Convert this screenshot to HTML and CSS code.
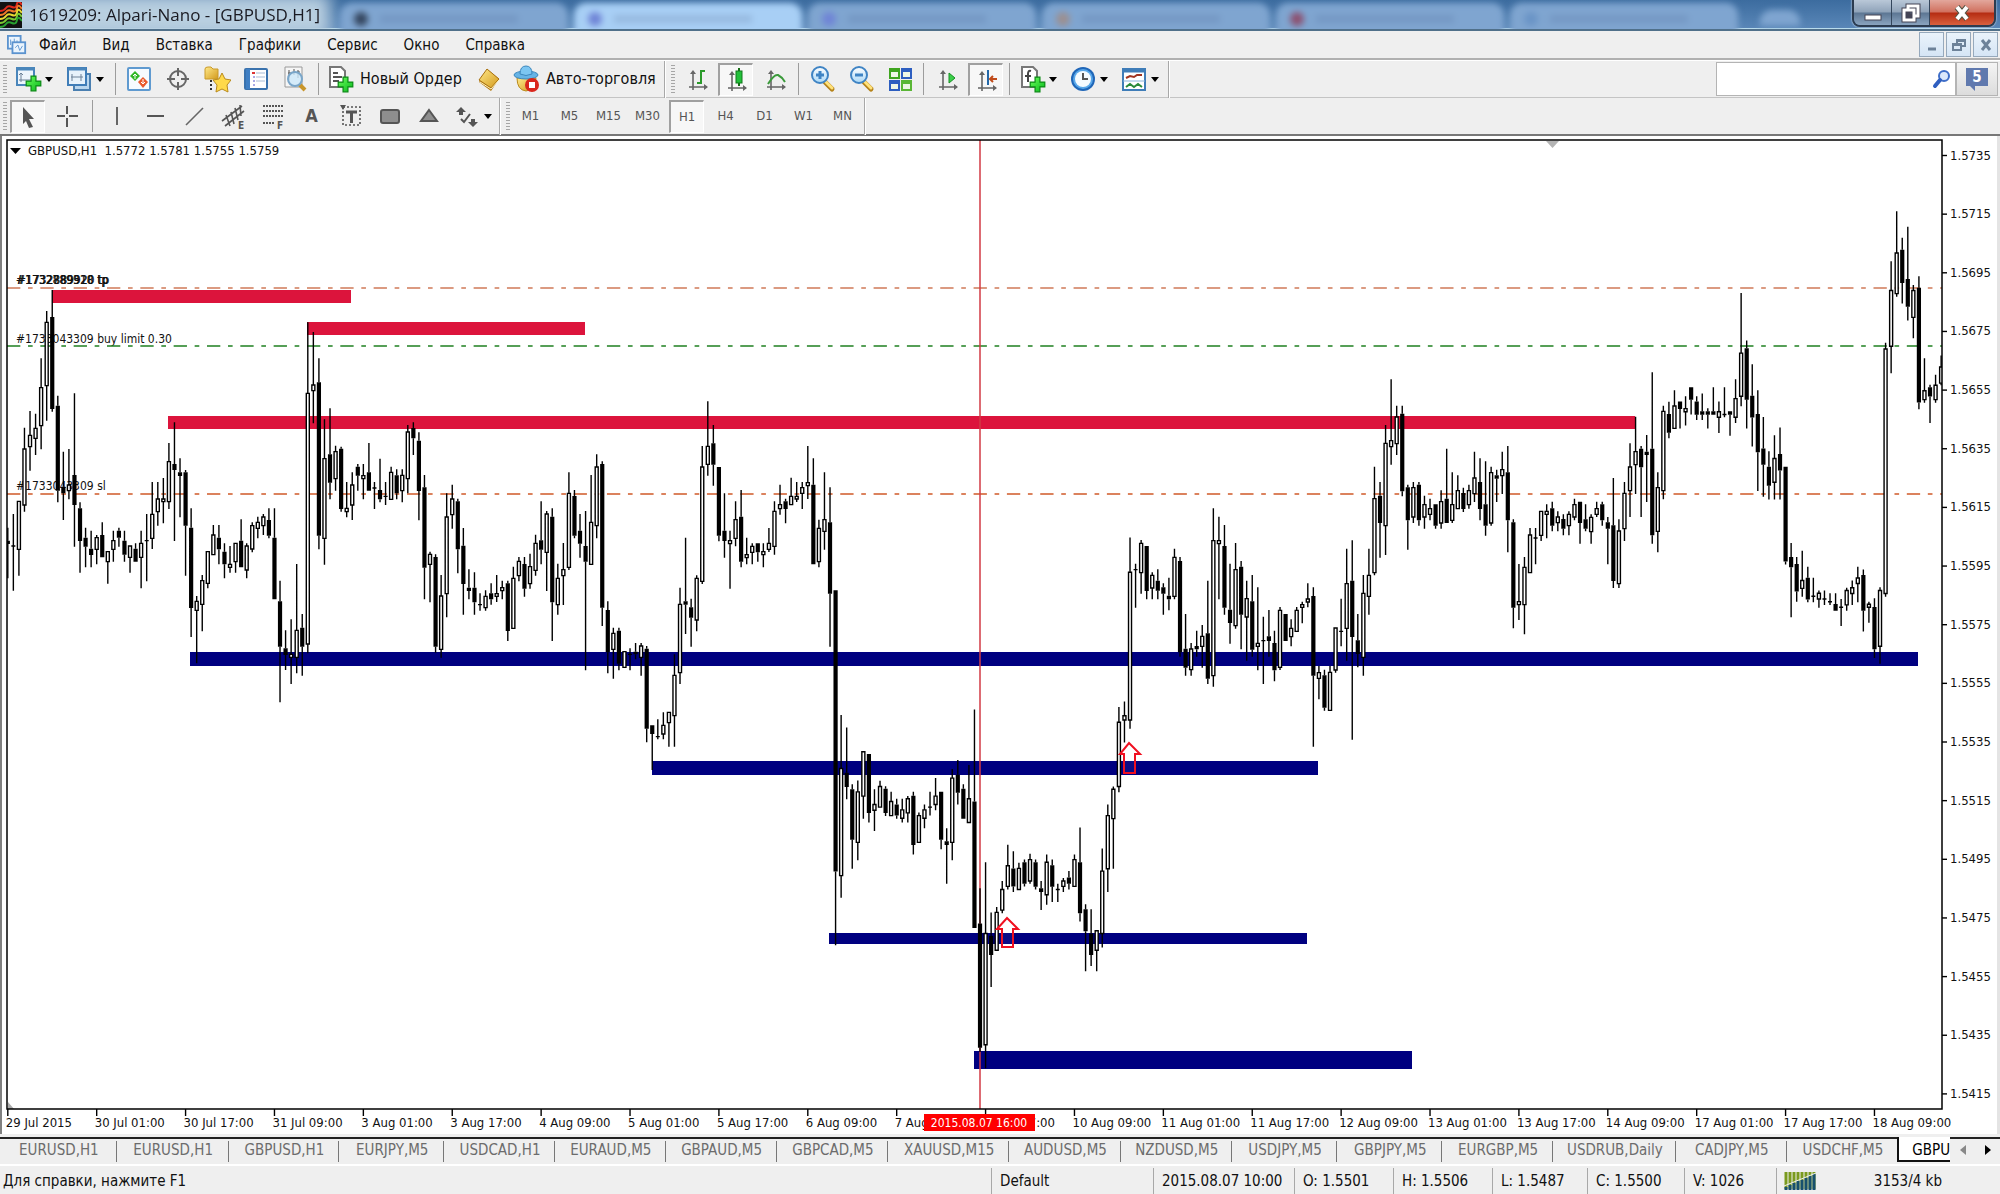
FILE: index.html
```html
<!DOCTYPE html>
<html lang="ru">
<head>
<meta charset="utf-8">
<title>1619209: Alpari-Nano - [GBPUSD,H1]</title>
<link rel="stylesheet" href="styles.css">
</head>
<body>
<svg class="defs" aria-hidden="true">
  <defs>
    <linearGradient id="gold" x1="0" y1="0" x2="1" y2="1"><stop offset="0" stop-color="#ffe98a"/><stop offset="1" stop-color="#d39a1c"/></linearGradient>
    <linearGradient id="green" x1="0" y1="0" x2="1" y2="1"><stop offset="0" stop-color="#6dff5c"/><stop offset="1" stop-color="#06b81c"/></linearGradient>
    <linearGradient id="lens" x1="0" y1="0" x2="0" y2="1"><stop offset="0" stop-color="#fff"/><stop offset="1" stop-color="#a9d8f7"/></linearGradient>
    <symbol id="plus" viewBox="0 0 14 14"><path d="M5 1h4v4h4v4H9v4H5V9H1V5h4z" fill="url(#green)" stroke="#0a8a14"/></symbol>
    <symbol id="axes" viewBox="0 0 24 24"><path d="M7 4v18M3 19h18" fill="none" stroke="#666" stroke-width="1.6"/><path d="M7 2l3 4H4zM22 19l-4 3v-6z" fill="#666"/></symbol>
    <symbol id="glass" viewBox="0 0 26 28"><path d="M15 17l7 7" stroke="#b58218" stroke-width="5" stroke-linecap="round"/><path d="M16 17l6 6" stroke="#ffe27a" stroke-width="3" stroke-linecap="round"/><circle cx="10" cy="10" r="8" fill="url(#lens)" stroke="#3f84c4" stroke-width="2"/></symbol>
  </defs>
</svg>

<header class="title">
  <span class="glow"></span>
  <span class="ghosts" aria-hidden="true">
    <i class="ghost g1"></i><i class="ghost lit g2"></i><i class="ghost g3"></i><i class="ghost g4"></i><i class="ghost g5"></i><i class="ghost g6"></i><i class="ghost g7"></i>
  </span>
  <svg class="app" viewBox="0 0 22 26"><rect width="22" height="26" fill="#111"/><g fill="none" stroke-width="2"><path d="M0 9q4 0 6-3t6-1 5-3 5 1" stroke="#e02a1c"/><path d="M0 13q4 0 6-3t6-1 5-3 5 1" stroke="#f07828"/><path d="M0 17q4 0 6-3t6-1 5-3 5 1" stroke="#e8d832"/><path d="M0 21q4 0 6-3t6-1 5-3 5 1" stroke="#7ac832"/><path d="M0 25q4 0 6-3t6-1 5-3 5 1" stroke="#28a030"/></g></svg>
  <h1>1619209: Alpari-Nano - [GBPUSD,H1]</h1>
  <div class="winbtns">
    <button aria-label="Свернуть"><svg viewBox="0 0 20 20"><rect x="2" y="12" width="16" height="5" fill="#fff" stroke="#445"/></svg></button>
    <button aria-label="Развернуть"><svg viewBox="0 0 20 20"><g fill="#5c7693" stroke="#445" stroke-width="5"><path d="M7 3h10v10H7zM3 7h10v10H3z"/></g><g fill="none" stroke="#fff" stroke-width="3"><path d="M7 7V3h10v10h-4M3 7h10v10H3z"/></g></svg></button>
    <button class="close" aria-label="Закрыть"><svg viewBox="0 0 20 20"><path d="M5 4l10 12M15 4L5 16" stroke="#554" stroke-width="6"/><path d="M5 4l10 12M15 4L5 16" stroke="#fff" stroke-width="4"/></svg></button>
  </div>
</header>

<nav class="menu">
  <svg class="doc" viewBox="0 0 22 22"><rect x="1" y="1" width="14" height="14" fill="#eaf4fd" stroke="#5b93cf" stroke-width="2"/><path d="M4 5v6M8 4v5M11 6v4" stroke="#5b93cf"/><rect x="6" y="8" width="14" height="12" fill="#eaf4fd" stroke="#5b93cf" stroke-width="2"/><path d="M9 14l3-3 2 6 3-5" fill="none" stroke="#5b93cf"/></svg>
  <a href="#file">Файл</a><a href="#view">Вид</a><a href="#insert">Вставка</a><a href="#charts">Графики</a><a href="#tools">Сервис</a><a href="#window">Окно</a><a href="#help">Справка</a>
  <div class="mdi">
    <button aria-label="Свернуть окно"><svg viewBox="0 0 16 16"><path d="M4 12h8" stroke="#6d8299" stroke-width="3"/></svg></button>
    <button aria-label="Восстановить окно"><svg viewBox="0 0 16 16"><path d="M6 6V3h8v6h-3M2 7h8v6H2zM2 8h8M6 4h8" fill="none" stroke="#6d8299" stroke-width="2"/></svg></button>
    <button aria-label="Закрыть окно"><svg viewBox="0 0 16 16"><path d="M4 3l8 10M12 3L4 13" stroke="#6d8299" stroke-width="3"/></svg></button>
  </div>
</nav>

<div class="toolbars">
<div class="bar first">
  <span class="grip"></span>
  <button class="drop" aria-label="Новый график"><svg viewBox="0 0 28 28"><rect x="3" y="3" width="17" height="17" fill="#edf5fc" stroke="#4a86bb" stroke-width="2"/><path d="M3 4h17" stroke="#4a86bb" stroke-width="3"/><path d="M7 8v9M5 15h12M5 10l2-2 2 2" fill="none" stroke="#6c8197"/><use href="#plus" x="11" y="10" width="17" height="17"/></svg><b></b></button>
  <button class="drop" aria-label="Профили"><svg viewBox="0 0 28 28"><path d="M9 9h16v16H9z" fill="#b9d6ee" stroke="#4a7fb0" stroke-width="2"/><rect x="3" y="3" width="18" height="17" fill="#e7f2fb" stroke="#3f7db8" stroke-width="2"/><path d="M3 4h18" stroke="#4a86bb" stroke-width="3"/><path d="M6 12h12M7 9v7M16 9v7" stroke="#6c8197"/></svg><b></b></button>
  <span class="sep"></span>
  <button class="tool" aria-label="Обзор рынка"><svg viewBox="0 0 28 28"><rect x="3" y="3" width="22" height="22" rx="1" fill="#f7fbff" stroke="#5f9ad0" stroke-width="2"/><path d="M10 6l5 5-5 5-5-5z" fill="#2fb826"/><path d="M8 11l2-2 2 2M10 10v4" fill="none" stroke="#fff"/><path d="M18 12l5 5-5 6-5-6z" fill="#ea5a2c"/><path d="M16 17l2 2 2-2M18 14v4" fill="none" stroke="#fff"/></svg></button>
  <button class="tool" aria-label="Окно данных"><svg viewBox="0 0 28 28"><circle cx="14" cy="14" r="8" fill="none" stroke="#666" stroke-width="2"/><path d="M14 3v8M14 17v8M3 14h8M17 14h8" stroke="#666" stroke-width="2"/></svg></button>
  <button class="tool" aria-label="Навигатор"><svg viewBox="0 0 28 28"><path d="M2 14V4q0-2 3-2h3l2 2h5v10z" fill="url(#gold)" stroke="#c99a2a"/><path d="M8 15v12" stroke="#333" stroke-width="2" stroke-dasharray="2 2"/><path d="M19 8l3 6 6 1-4 5 1 7-6-3-6 3 1-7-4-5 6-1z" fill="#ffd94a" stroke="#b98a1c"/></svg></button>
  <button class="tool" aria-label="Терминал"><svg viewBox="0 0 28 28"><rect x="3" y="4" width="22" height="20" rx="1" fill="#fff" stroke="#3a72ad" stroke-width="2"/><path d="M6 4v20" stroke="#3f7fc4" stroke-width="4"/><path d="M10 8h3" stroke="#d33" stroke-width="2"/><path d="M11 12h2M11 16h2M11 20h2" stroke="#55c" stroke-width="1"/><path d="M14 8h9M14 12h9M14 16h9" stroke="#a9bdd6"/></svg></button>
  <button class="tool" aria-label="Тестер стратегий"><svg viewBox="0 0 28 28"><path d="M4 2h17v20H4z" fill="#f6f6f6" stroke="#999"/><path d="M8 5v10M13 4v6M17 5v8M7 8h3M16 7h3" stroke="#555"/><path d="M18 19l6 6" stroke="#c8952a" stroke-width="4"/><circle cx="14" cy="14" r="7" fill="#cde8fa" fill-opacity=".8" stroke="#7aa6c9" stroke-width="2"/></svg></button>
  <span class="sep"></span>
  <button class="text order"><svg viewBox="0 0 28 28"><path d="M4 2h11l4 4v16H4z" fill="#fff" stroke="#777" stroke-width="2"/><path d="M7 8h5M7 12h9M7 16h6" stroke="#555" stroke-width="2"/><use href="#plus" x="11" y="11" width="17" height="17"/></svg>Новый Ордер</button>
  <button class="tool book" aria-label="MetaEditor"><svg viewBox="0 0 28 28"><path d="M4 17L13 5l11 9-8 12z" fill="#b47a12"/><path d="M4 15L12 4l12 10-8 9z" fill="url(#gold)" stroke="#a8700e"/><path d="M5 17l11 7 8-9" fill="none" stroke="#fff3c0"/></svg></button>
  <button class="text auto"><svg viewBox="0 0 28 28"><path d="M5 13q0 12 9 13 9-1 10-13z" fill="url(#gold)" stroke="#b98a1c"/><ellipse cx="14" cy="10" rx="12" ry="4" fill="#66b4e6" stroke="#3c87bd"/><path d="M8 9q0-8 6-8t6 8q-6 3-12 0z" fill="#7cc6f2" stroke="#3c87bd"/><circle cx="20" cy="20" r="7" fill="#d9261c"/><rect x="17" y="17" width="6" height="6" fill="#fff"/></svg>Авто-торговля</button>
  <span class="end"></span>
  <span class="grip"></span>
  <button class="tool" aria-label="Бары"><svg viewBox="0 0 28 28"><use href="#axes" x="3" y="3" width="24" height="24"/><path d="M18 5v14M18 6h4M14 18h4" stroke="#2a9a2a" stroke-width="2"/></svg></button>
  <button class="tool on" aria-label="Японские свечи"><svg viewBox="0 0 28 28"><use href="#axes" x="3" y="3" width="24" height="24"/><path d="M17 2v18" stroke="#176f17" stroke-width="2"/><rect x="14" y="5" width="6" height="12" fill="#22c03a" stroke="#117a1b"/></svg></button>
  <button class="tool" aria-label="Линия"><svg viewBox="0 0 28 28"><use href="#axes" x="3" y="3" width="24" height="24"/><path d="M7 19q6-10 10-9 4 2 7 7" fill="none" stroke="#3a9a3a" stroke-width="2"/></svg></button>
  <span class="sep"></span>
  <button class="tool" aria-label="Увеличить"><svg viewBox="0 0 28 28"><use href="#glass" x="2" y="0" width="26" height="28"/><path d="M12 6v8M8 10h8" stroke="#3f84c4" stroke-width="3"/></svg></button>
  <button class="tool" aria-label="Уменьшить"><svg viewBox="0 0 28 28"><use href="#glass" x="2" y="0" width="26" height="28"/><path d="M8 10h8" stroke="#3f84c4" stroke-width="3"/></svg></button>
  <button class="tool" aria-label="Окна мозаикой"><svg viewBox="0 0 28 28"><path d="M3 3h11v11H3z" fill="#3fa51f"/><path d="M15 3h11v11H15z" fill="#2d5ec0"/><path d="M3 15h11v11H3z" fill="#2d5ec0"/><path d="M15 15h11v11H15z" fill="#5ab636"/><path d="M5 7h7v5H5zM17 7h7v5h-7zM5 19h7v5H5zM17 19h7v5h-7z" fill="#eef6e6"/></svg></button>
  <span class="sep"></span>
  <button class="tool" aria-label="Автопрокрутка"><svg viewBox="0 0 28 28"><use href="#axes" x="3" y="3" width="24" height="24"/><path d="M16 8v10l6-5z" fill="#3ccf4a" stroke="#149022"/></svg></button>
  <button class="tool on" aria-label="Сдвиг графика"><svg viewBox="0 0 28 28"><use href="#axes" x="3" y="3" width="24" height="24"/><path d="M16 4v15" stroke="#2468a8" stroke-width="2"/><path d="M18 13h7M21 10l-3 3 3 3" fill="none" stroke="#c04a1a" stroke-width="2"/></svg></button>
  <span class="sep"></span>
  <button class="drop" aria-label="Индикаторы"><svg viewBox="0 0 28 28"><path d="M4 2h11l4 4v16H4z" fill="#fff" stroke="#777" stroke-width="2"/><path d="M13 6q-3-1-3 3v8M7 11h6" fill="none" stroke="#444" stroke-width="2"/><use href="#plus" x="11" y="11" width="17" height="17"/></svg><b></b></button>
  <button class="drop" aria-label="Периоды"><svg viewBox="0 0 28 28"><circle cx="14" cy="14" r="12" fill="#1f66b8"/><circle cx="14" cy="14" r="10" fill="#59a8ea"/><circle cx="14" cy="14" r="8" fill="#f6fbff"/><path d="M14 8v6h5" fill="none" stroke="#555" stroke-width="2"/></svg><b></b></button>
  <button class="drop" aria-label="Шаблоны"><svg viewBox="0 0 28 28"><rect x="3" y="4" width="22" height="21" fill="#fff" stroke="#3f7db8" stroke-width="2"/><path d="M3 6h22" stroke="#3f7db8" stroke-width="3"/><path d="M3 16h22" stroke="#8ab4dc"/><path d="M6 13l4-2 4 1 3-2h5" fill="none" stroke="#a03420" stroke-width="2"/><path d="M6 22l4-3 4 3 4-3 4 3" fill="none" stroke="#2a8a3a" stroke-width="2"/></svg><b></b></button>
  <span class="end"></span>
  <form class="search"><input type="search" aria-label="Поиск"><svg viewBox="0 0 20 24"><circle cx="13" cy="9" r="5" fill="#dbe8fb" stroke="#3f6ec8" stroke-width="2"/><path d="M9 13l-5 6" stroke="#2f5fc0" stroke-width="4" stroke-linecap="round"/></svg><button type="button" aria-label="Сообщения"><svg viewBox="0 0 24 28"><path d="M1 3h22v18H10v5l-5-5H1z" fill="#6079ae"/><text x="12" y="17">5</text></svg></button></form>
</div>
<div class="bar second">
  <span class="grip"></span>
  <button class="tool on" aria-label="Курсор"><svg viewBox="0 0 28 28"><path d="M9 4l11 12h-5l4 8-4 1-3-7-3 3z" fill="#555"/></svg></button>
  <button class="tool" aria-label="Перекрестие"><svg viewBox="0 0 28 28"><path d="M14 4v8M14 16v9M4 14h8M16 14h9" stroke="#555" stroke-width="2"/></svg></button>
  <span class="sep wide"></span>
  <button class="tool" aria-label="Вертикальная линия"><svg viewBox="0 0 28 28"><path d="M14 5v18" stroke="#666" stroke-width="2"/></svg></button>
  <button class="tool" aria-label="Горизонтальная линия"><svg viewBox="0 0 28 28"><path d="M5 14h17" stroke="#555" stroke-width="2"/></svg></button>
  <button class="tool" aria-label="Линия тренда"><svg viewBox="0 0 28 28"><path d="M5 23L22 6" stroke="#666" stroke-width="1.600"/></svg></button>
  <button class="tool" aria-label="Канал"><svg viewBox="0 0 28 28"><path d="M2 19L22 4M5 24L24 9M6 13l4 11M11 10l3 12M15 6l3 12M20 3l1 11" stroke="#555" stroke-width="1.600"/><text x="18" y="27">E</text></svg></button>
  <button class="tool" aria-label="Фибоначчи"><svg viewBox="0 0 28 28"><path d="M4 4h20M4 9h20M4 14h20M4 21h12" stroke="#555" stroke-width="2" stroke-dasharray="2 1"/><text x="18" y="27">F</text></svg></button>
  <button class="tool glyph">A</button>
  <button class="tool" aria-label="Метка"><svg viewBox="0 0 28 28"><rect x="6" y="5" width="17" height="18" fill="none" stroke="#555" stroke-width="1.600" stroke-dasharray="2 2"/><path d="M9 10h11M14.500 10v11" stroke="#555" stroke-width="3"/><path d="M3 3h6l-3 5z" fill="#555"/></svg></button>
  <button class="tool" aria-label="Прямоугольник"><svg viewBox="0 0 28 28"><rect x="5" y="8" width="18" height="13" rx="2" fill="#8e8e8e" stroke="#555" stroke-width="2"/></svg></button>
  <button class="tool" aria-label="Треугольник"><svg viewBox="0 0 28 28"><path d="M14 8l8 11H6z" fill="#8e8e8e" stroke="#555" stroke-width="2"/></svg></button>
  <button class="drop" aria-label="Стрелки"><svg viewBox="0 0 28 28"><path d="M8 5l5 5h-3v3H6v-3H3zM20 25l-5-5h3v-3h4v3h3z" fill="#555"/><path d="M8 17l3 3 6-8" fill="none" stroke="#555" stroke-width="2"/></svg><b></b></button>
  <span class="end"></span>
  <span class="grip"></span>
  <button class="tool tf">M1</button><button class="tool tf">M5</button><button class="tool tf">M15</button><button class="tool tf">M30</button><button class="tool tf on">H1</button><button class="tool tf">H4</button><button class="tool tf">D1</button><button class="tool tf">W1</button><button class="tool tf">MN</button>
  <span class="end"></span>
</div>
</div>

<main class="window">
  <svg class="chart" viewBox="0 136 2000 998" role="img" aria-label="GBPUSD,H1">
    <defs><clipPath id="plot"><rect x="7" y="140" width="1935" height="969"/></clipPath></defs>
    <text x="28" y="155">GBPUSD,H1&#160; 1.5772 1.5781 1.5755 1.5759</text>
    <path d="M10 148h11l-5.500 6z"/>
    <g class="orders">
      <text x="16" y="284">#1732789910 tp</text><text x="16" y="284">#1732889328 tp</text><text x="17" y="284">#1732889920 tp</text>
      <text x="16" y="343">#1733043309 buy limit 0.30</text>
      <text x="16" y="490">#1733043309 sl</text>
    </g>
    <g class="levels">
      <path class="tp" d="M7 288H1942"/><path class="buy" d="M7 346H1942"/><path class="sl" d="M7 494H1942"/>
    </g>
    <g class="zones">
      <rect class="sell" x="52" y="290" width="299" height="13"/>
      <rect class="sell" x="307" y="322" width="278" height="13"/>
      <rect class="sell" x="168" y="416" width="1467" height="13"/>
      <rect class="bull" x="190" y="652" width="1728" height="14"/>
      <rect class="bull" x="652" y="761" width="666" height="14"/>
      <rect class="bull" x="829" y="933" width="478" height="11"/>
      <rect class="bull" x="974" y="1051" width="438" height="18"/>
    </g>
    <path class="cross" d="M980 140V1109"/>
    <g clip-path="url(#plot)"><path class="bodies" id="up"/><path class="wicks" id="wicks"/><path class="solid" id="down"/></g>
    <g class="marks">
      <path d="M1129 743l11 11h-5v19h-11v-19h-4z"/>
      <path d="M1007 918l11 11h-5v18h-11v-18h-5z"/>
    </g>
    <path d="M1546 141h13l-6.500 7z" fill="#b4b4b4"/><path d="M8 1102l6 7H8z" fill="#aaa"/>
    <path class="frame" d="M7 1109V140H1942V1109z"/>
    <g id="axis" class="axis"></g>
    <rect x="924" y="1114" width="111" height="17" fill="#f00"/><text class="now" x="979" y="1127">2015.08.07 16:00</text>
  </svg>
</main>

<nav class="tabs">
  <a href="#t1">EURUSD,H1</a><a href="#t2">EURUSD,H1</a><a href="#t3">GBPUSD,H1</a><a href="#t4">EURJPY,M5</a><a href="#t5">USDCAD,H1</a><a href="#t6">EURAUD,M5</a><a href="#t7">GBPAUD,M5</a><a href="#t8">GBPCAD,M5</a><a href="#t9">XAUUSD,M15</a><a href="#t10">AUDUSD,M5</a><a href="#t11">NZDUSD,M5</a><a href="#t12">USDJPY,M5</a><a href="#t13">GBPJPY,M5</a><a href="#t14">EURGBP,M5</a><a href="#t15">USDRUB,Daily</a><a href="#t16">CADJPY,M5</a><a href="#t17">USDCHF,M5</a><a href="#t18" class="active">GBPU</a>
  <div class="scroll"><button aria-label="Назад"><svg viewBox="0 0 8 12"><path d="M7 1v10L1 6z" fill="#888"/></svg></button><button aria-label="Вперёд"><svg viewBox="0 0 8 12"><path d="M1 1v10l6-5z" fill="#000"/></svg></button></div>
</nav>

<footer class="status">
  <span>Для справки, нажмите F1</span><span>Default</span><span>2015.08.07 10:00</span><span>O: 1.5501</span><span>H: 1.5506</span><span>L: 1.5487</span><span>C: 1.5500</span><span>V: 1026</span>
  <span class="net"><svg viewBox="0 0 33 18"><path d="M2 0v17M6 0v17M10 0v17M14 0v17M18 0v17M22 0v17M26 0v17M30 0v17" stroke="#7a9a1e" stroke-width="3"/><path d="M2 15v3M6 13v5M10 11v7M14 9v9M18 8v10M22 6v12M26 4v14M30 2v16" stroke="#17506e" stroke-width="3"/><path d="M0 14L32 1" stroke="#efefef"/></svg>3153/4 kb</span>
</footer>
<script src="chart.js"></script>
</body>
</html>
```

FILE: styles.css
```css
* { box-sizing: border-box; }
body { margin: 0; background: #efefef; color: #111; font: 15px/20px "DejaVu Sans Condensed", "DejaVu Sans", sans-serif; overflow-x: hidden; }
button { margin: 0; padding: 0; border: 0; background: none; color: inherit; font: inherit; }
a { color: inherit; text-decoration: none; }
svg { display: block; flex: none; }
.defs { position: absolute; width: 0; height: 0; }

.title { position: relative; display: flex; align-items: center; gap: 7px; height: 31px; overflow: hidden; background: linear-gradient(#3c6c9f, #5a87b8); border-bottom: 2px solid #50708a; box-shadow: inset 0 -1px #b9dcec; }
.title > * { position: relative; }
.app { width: 22px; height: 26px; }
.title h1 { margin: 0; font: 17px/28px "Open Sans", "Noto Sans", sans-serif; color: #1a1a22; }
.title .glow { position: absolute; left: -20px; top: -6px; width: 350px; height: 44px; background: #b9cfe0; filter: blur(8px); }
.title .ghosts { position: absolute; inset: 0; filter: blur(3px); }
.ghost { position: absolute; top: 3px; height: 36px; width: 11.400%; background: #7fa5d0; border-radius: 12px 12px 0 0; }
.ghost::before { content: ""; position: absolute; left: 14px; top: 9px; width: 14px; height: 14px; border-radius: 7px; background: #34455e; }
.ghost::after { content: ""; position: absolute; left: 40px; right: 50px; top: 12px; height: 8px; background: #7598c4; }
.ghost.lit { background: #a8cff5; }
.ghost.lit::before, .g3::before { background: #6f84d6; }
.ghost.lit::after { background: #97bae0; }
.g1 { left: 17%; } .g2 { left: 28.700%; } .g3 { left: 40.400%; } .g4 { left: 52.100%; } .g5 { left: 63.800%; } .g6 { left: 75.500%; } .g7 { left: 88%; width: 2%; top: 10px; height: 16px; }
.g4::before { background: #9c8f90; } .g5::before { background: #8c5070; } .g6::before { background: #6a94c6; }
.g7::before, .g7::after { display: none; }
.title .winbtns { display: flex; align-self: flex-start; margin: -2px 4px 0 auto; border: 2px solid #2c3c50; border-radius: 0 0 8px 8px; overflow: hidden; box-shadow: 0 0 2px #fff; }
.winbtns button { display: grid; place-items: center; width: 38px; height: 25px; border-right: 1px solid #33465c; background: linear-gradient(#b9c8d8, #8fa3b9 48%, #5c7693 52%, #8aa4bf); }
.winbtns svg { width: 20px; height: 20px; }
.winbtns .close { width: 64px; border: 0; background: linear-gradient(#e2a79c, #d0705e 48%, #b52c12 52%, #d8603e); }

.menu { display: flex; align-items: center; height: 29px; padding-left: 7px; border-bottom: 2px solid #b0b0b0; }
.menu .doc { width: 20px; height: 22px; margin-right: 12px; }
.menu a { margin-right: 26px; }
.mdi { display: flex; gap: 2px; margin: 0 2px 0 auto; }
.mdi button { display: grid; place-items: center; width: 25px; height: 25px; border: 1px solid #96a9bc; background: linear-gradient(#eaf3fb, #d5e5f5); }
.mdi svg { width: 16px; height: 16px; }

.toolbars { border-bottom: 2px solid #777; }
.bar { display: flex; align-items: center; height: 37px; padding-left: 3px; border-top: 1px solid #fff; }
.grip { flex: none; width: 4px; height: 28px; margin-right: 4px; background: repeating-linear-gradient(#a6a6a6 0 1px, #efefef 1px 3px); }
.bar button { flex: none; }
.bar button svg { width: 28px; height: 28px; }
.tool { display: grid; place-items: center; width: 35px; height: 33px; margin-right: 4px; border: 1px solid transparent; }
.drop { display: flex; align-items: center; width: 48px; height: 33px; gap: 3px; padding-left: 3px; margin-right: 3px; }
.drop b { border: 4px solid transparent; border-top: 5px solid #000; border-bottom: 0; }
.on { border-width: 2px 1px 1px 2px; border-color: #a0a0a0 #fff #fff #a0a0a0; background: #f7f7f7; }
.sep { flex: none; width: 1px; height: 32px; margin: 0 5px 0 2px; background: #9c9c9c; }
.wide { margin: 0 6px 0 4px; }
.end { flex: none; width: 2px; height: 37px; margin-right: 5px; background: #a8a8a8; border-right: 1px solid #fff; }
.text { display: flex; align-items: center; gap: 6px; height: 33px; white-space: nowrap; }
.bar .text { font-size: 16px; }
.order { width: 142px; margin: 0 3px 0 2px; }
.book { margin: 0 1px 0 0; }
.auto { width: 153px; padding-left: 5px; margin-right: 4px; }
.search { display: flex; align-items: center; margin: 0 2px 0 auto; width: 282px; height: 34px; border: 1px solid #b4b4b4; background: #fff; }
.search input { flex: 1; min-width: 0; height: 30px; border: 0; outline: 0; background: #fff; }
.search > svg { width: 20px; height: 24px; margin-right: 4px; }
.bar .search button { display: grid; place-items: center; width: 42px; height: 32px; border-left: 2px solid #b4b4b4; background: linear-gradient(#f4f4f4, #dcdcdc); }
.bar .search button svg { width: 24px; height: 28px; }
.search text { font: bold 15px "DejaVu Sans Condensed", sans-serif; fill: #fff; text-anchor: middle; }
.second { border-top: 1px solid #c4c4c4; color: #555; }
.second .grip { margin-right: 3px; }
.second .drop { width: 46px; }
.second text { font: bold 10px "DejaVu Sans Condensed", sans-serif; fill: #555; }
.bar .tf { font-size: 13px; }
.bar .glyph { font-size: 18px; font-weight: bold; }

.window { background: #fff; box-shadow: inset 2px 0 #808080, inset -3px 0 #e4e4e4; }
.chart { width: 100%; height: auto; }
.chart text { font: 13px "DejaVu Sans Condensed", "DejaVu Sans", sans-serif; fill: #111; }
.chart .orders text, .chart .now { font-size: 12px; }
.levels path { fill: none; stroke: #cf5a28; stroke-width: 1.500; stroke-dasharray: 13.330 7.670 4.660 7.670; }
.levels .tp { stroke: #cf7a58; }
.levels .buy { stroke: #1f8020; }
.sell { fill: #dc143c; }
.bull { fill: #000080; }
.cross { stroke: #d23a44; stroke-width: 1.500; }
.bodies { fill: #fff; stroke: #000; stroke-width: 1.400; }
.wicks { fill: none; stroke: #000; stroke-width: 1.400; }
.solid { fill: #000; }
.marks path { fill: #fff; fill-opacity: .05; stroke: #f01020; stroke-width: 2; }
.frame { fill: none; stroke: #000; stroke-width: 1.500; }
.axis path { stroke: #000; stroke-width: 1.400; }
.chart .now { fill: #fff; text-anchor: middle; }

.tabs { display: grid; grid-template-columns: 117fr 112fr 111fr 105fr 111fr 111fr 111fr 112fr 121fr 112fr 111fr 106fr 105fr 111fr 123fr 111fr 111fr 50fr 50fr; height: 32px; padding-bottom: 4px; border-top: 3px solid #efefef; border-bottom: 2px solid #fff; box-shadow: inset 0 2px #222; color: #6c6c6c; }
.tabs a { margin: 4px 0 0; padding-left: 2px; line-height: 19px; text-align: center; border-right: 1px solid #777; white-space: nowrap; }
.tabs a:nth-last-child(3) { border: 0; }
.tabs a.active { margin: 0; padding: 4px 0 0 13px; text-align: left; color: #000; background: #fff; border: 0; border-left: 2px solid #111; border-bottom: 2px solid #111; }
.scroll { display: flex; justify-content: space-around; align-items: center; }
.scroll svg { width: 8px; height: 12px; }

.status { display: grid; grid-template-columns: 991fr 162fr 141fr 99fr 99fr 95fr 97fr 92fr 224fr; height: 28px; align-items: end; }
.status span { height: 26px; line-height: 26px; padding-left: 8px; border-left: 1px solid #a8a8a8; white-space: nowrap; }
.status span:first-child { border: 0; padding-left: 3px; }
.status .net { display: flex; justify-content: space-between; align-items: center; padding: 0 58px 0 7px; }
.net svg { width: 33px; height: 18px; }
```

FILE: chart.js
```js
// Hourly bars. u = rising, n = falling: high, body top, body bottom, low.
// d = open equals close: high, body, low. Each block has its own top and scale.
const blocks = [
  { top: 260, scale: 3, bars: `n803 842 852 955,d762 858 992,u724 724 868 947,u503 567 735 755,u453 526 560 632,u461 505 535 585,u295 383 497 568,u153 187 377 482,n90 171 447 455,n407 437 692 727,n575 680 700 780,u567 675 692 718,n400 645 735 860,n727 745 843 938,n803 833 860 922,n812 866 885 922,u825 833 868 913,n787 825 892 892,u875 875 905 971,u812 842 868 905,n803 812 833 860,n812 842 884 905,u858 858 892 938,n850 866 905 905,u812 850 892 985,d762 842 964,u666 763 835 867,u666 717 755 797,u654 717 725 790,u549 605 725 747,n487 612 630 843,n595 637 648 772,n630 637 797 947,n745 803 1044 1131,u1008 1024 1051 1210,u945 962 1033 1114,u875 875 970 985,u795 825 884 884,n795 833 868 913,n850 875 913 955,u858 913 922 938,u850 850 905 938,n778 842 922 922,u850 858 930 955,u787 797 867 877,u770 787 805 835,u762 771 797 825,n745 780 827 835,n745 833 1018 1018,n962 1024 1160 1327,n1111 1165 1185 1230,u1078 1183 1192 1272,u912 1111 1192 1240,n1062 1103 1160 1247,u187 400 1152 1180,u216 375 392 490,n295 367 827 868,u478 596 835 914,n445 583 668 718,u557 575 656 692,n560 566 747 755,u666 745 755 772,u637 675 735 780,n612 620 647 692,u612 647 656 718,n549 637 692 692,d666 684 747,n596 690 718 727,d666 709 735,u620 637 718 718,n628 646 700 718,u628 646 692 727,u495 516 656 700,n487 504 535 585` },
  { top: 380, scale: 3, bars: `n157 182 333 421,n285 322 563 658,u515 523 553 667,n523 531 800 818,u585 648 808 833,u340 411 641 712,u314 357 404 446,n356 364 508 580,n444 497 612 704,n568 623 633 658,n577 623 667 704,d640 674 692,u631 649 683 692,n610 640 658 674,u585 641 649 666,u602 623 632 658,n602 610 753 783,u560 595 745 745,u531 544 587 604,n531 552 626 650,u521 560 611 626,u464 490 571 587,n364 481 509 553,u393 402 517 633,n385 410 667 783,u551 595 674 704,u489 569 587 675,u277 340 562 570,n330 348 467 475,n402 452 491 533,n393 498 545 871,u285 427 553 553,u223 261 437 475,n244 252 683 738,n664 690 817 880,u743 760 808 896,n743 752 851 871,u815 815 862 862,d805 823 871,n789 815 823 838,u789 798 832 887,n798 806 1046 1087,n1036 1036 1062 1170,d1018 1070 1078,u997 1036 1062 1078,u997 997 1028 1100,u823 886 1007 1100,u623 673 878 912,n473 664 674 762,n656 682 713 800,u586 595 720 754,u198 261 604 612,u64 199 253 287,n135 190 254 317,n261 261 467 484,n340 452 483 533,u452 482 491 626,u364 419 475 499,n330 410 545 562,u473 524 533 553,u490 499 517 553,n490 490 517 545,u490 515 524 562,u444 490 508 516,u364 394 499 524,u314 374 386 404,n356 364 387 430,u293 349 374 374,u306 349 357 366,u306 323 340 387,u198 308 317 357,n235 314 553 553,u419 445 545 562,u277 419 454 509,n322 427 641 800` },
  { top: 480, scale: 2.6133, bars: `n288 288 1023 1216,u614 754 1034 1092,n647 765 802 834,n795 808 940 1016,u785 815 947 994,u710 710 826 885,n716 716 870 895,u808 848 863 917,u786 801 855 855,n800 807 870 878,u815 840 877 877,n833 848 877 885,u833 862 884 895,u826 833 870 895,n815 825 954 979,u869 877 947 947,u848 862 884 910,d815 855 877,u779 826 848 863,n815 815 940 965,n910 944 954 1055,u755 779 947 994,n732 770 817 848,n795 807 885 885,u745 833 895 895,n600 840 1171 1171,n1067 1159 1484 1495,u999 1185 1476 1537,n1130 1191 1241 1325,u1116 1130 1229 1229,u1048 1070 1124 1132,u953 1008 1062 1070,n970 1015 1062 1077,u1000 1015 1070 1070,n992 999 1055 1062,u977 992 1048 1055,n992 999 1063 1070,n1048 1067 1077 1124,u979 999 1084 1110,n992 1007 1063 1103,d1055 1070 1103,u1040 1048 1062 1077,n1022 1039 1055 1070,u979 992 1062 1062,n908 999 1132 1154,n1109 1122 1179 1284,n1122 1185 1241 1270,u1178 1178 1229 1284,u963 1022 1185 1222,u848 877 1016 1077,u801 808 885 1016,u593 633 801 816,u579 616 627 686,u150 241 627 650` },
  { top: 480, scale: 3, bars: `d251 269 383,u180 190 278 341,n198 198 333 358,u277 286 324 358,n268 302 332 358,n310 322 341 404,n293 347 358 391,u206 232 349 358,n231 243 517 530,n402 506 563 587,u489 507 569 587,n452 498 508 530,u435 469 499 563,n302 460 596 612,u85 182 587 620,u110 182 191 358,n135 198 383 404,n251 389 429 491,u189 269 437 446,n243 260 404 508,u302 356 411 542,n285 364 509 530,u322 490 499 571,d410 482 612,n390 469 483 530,n452 489 571 604,u381 391 562 570,n402 402 483 483,u418 445 470 499,u381 391 454 454,u365 374 382 430,u310 357 366 382,n322 348 587 800,u558 578 595 658,n569 586 683 692,u558 577 691 691,u444 444 570 578,d356 454 499,u206 311 445 542,n181 302 471 779,n402 481 522 562,u285 340 532 587,u206 286 349 404` },
  { top: 360, scale: 3, bars: `u320 416 638 646,n366 407 489 593,u195 250 497 585,u58 242 260 314,u137 171 251 285,n137 161 394 409,n374 382 481 569,u366 383 471 489,n366 374 481 497,u407 434 471 506,u416 446 463 481,n433 433 497 506,u391 425 489 506,n266 416 489 489,u337 434 481 489,u346 392 446 446,n383 399 447 456,u374 392 434 446,u275 354 401 426,n295 366 447 481,n304 433 497 527,u320 338 489 497,n329 346 356 426,u275 329 347 402,n258 337 481 577,n478 487 743 805,u612 725 734 780,u591 622 734 823,u504 525 638 638,d504 534 613,u454 454 526 543,u433 454 463 535,n425 445 497 514,u454 471 488 514,n463 477 506 526,u454 463 497 526,u416 434 471 481,n425 425 489 551,n433 478 506 514,u463 472 515 551,u425 446 463 471,n425 433 481 497,n471 487 506 613,n354 496 663 684,u478 513 671 684,u366 400 506 543,u250 321 392 471,u170 275 314 402,n258 266 322 471,n225 275 285 426,n37 266 526 551,u337 383 514 577,u137 154 392 418,n125 162 218 235,u91 138 205 205` },
  { top: 130, scale: 2.9037, bars: `n788 788 810 867,u773 809 818 858,n747 747 783 826,n773 788 827 842,n765 817 827 842,n808 817 827 867,n747 817 827 827,u788 818 834 880,d747 826 834,n817 817 827 888,u724 780 834 851,u473 648 773 802,n611 634 783 867,n680 772 835 919,n756 825 936 1048,n833 925 972 1065,n933 978 1033 1073,u886 954 1023 1073,n864 941 989 1073,n978 978 1253 1262,n1199 1240 1270 1415,n1240 1260 1340 1370,u1222 1308 1331 1355,n1268 1300 1363 1371,d1300 1354 1371,u1337 1345 1362 1387,d1337 1362 1379,d1345 1370 1379,n1345 1376 1396 1396,d1362 1386 1440,u1329 1337 1379 1396,u1308 1329 1346 1379,u1268 1301 1317 1371,n1276 1292 1396 1456,u1370 1377 1386 1431,n1360 1385 1508 1533,u1328 1337 1499 1550,u618 636 1346 1355,u381 466 628 706,u236 357 475 484,n313 348 444 504,n281 433 513 553,u450 466 544 605,n425 458 791 811,u663 757 783 792,n740 747 774 851,u711 741 783 792,u655 688 735 741` }
];

const step = 50 / 9;
const first = 7.8;
let index = 0, up = '', down = '', wicks = '';
for (const block of blocks) {
  for (const bar of block.bars.split(',')) {
    const v = bar.slice(1).split(' ').map(n => block.top + n / block.scale);
    const x = first + step * index++;
    if (bar[0] === 'd') {
      wicks += `M${x} ${v[0]}V${v[2]}M${x - 2} ${v[1]}h4`;
      continue;
    }
    wicks += `M${x} ${v[0]}V${v[1]}M${x} ${v[2]}V${v[3]}`;
    if (bar[0] === 'u') up += `M${x - 1.5} ${v[1]}h3V${v[2]}h-3z`;
    else down += `M${x - 2.1} ${v[1]}h4.2V${v[2]}h-4.2z`;
  }
}
document.getElementById('up').setAttribute('d', up);
document.getElementById('down').setAttribute('d', down);
document.getElementById('wicks').setAttribute('d', wicks);

const times = ['29 Jul 2015', '30 Jul 01:00', '30 Jul 17:00', '31 Jul 09:00', '3 Aug 01:00', '3 Aug 17:00', '4 Aug 09:00', '5 Aug 01:00', '5 Aug 17:00', '6 Aug 09:00', '7 Aug 01:00', '7 Aug 17:00', '10 Aug 09:00', '11 Aug 01:00', '11 Aug 17:00', '12 Aug 09:00', '13 Aug 01:00', '13 Aug 17:00', '14 Aug 09:00', '17 Aug 01:00', '17 Aug 17:00', '18 Aug 09:00'];
let axis = '';
times.forEach((label, i) => {
  const x = first + step * 16 * i;
  axis += `<path d="M${x} 1109v7"/><text x="${x - 2}" y="1127">${label}</text>`;
});
for (let i = 0; i < 17; i++) {
  const y = 155.5 + 58.65 * i;
  axis += `<path d="M1942 ${y}h5"/><text x="1950" y="${y + 4}">${(1.5735 - i * 0.002).toFixed(4)}</text>`;
}
document.getElementById('axis').innerHTML = axis;
```
